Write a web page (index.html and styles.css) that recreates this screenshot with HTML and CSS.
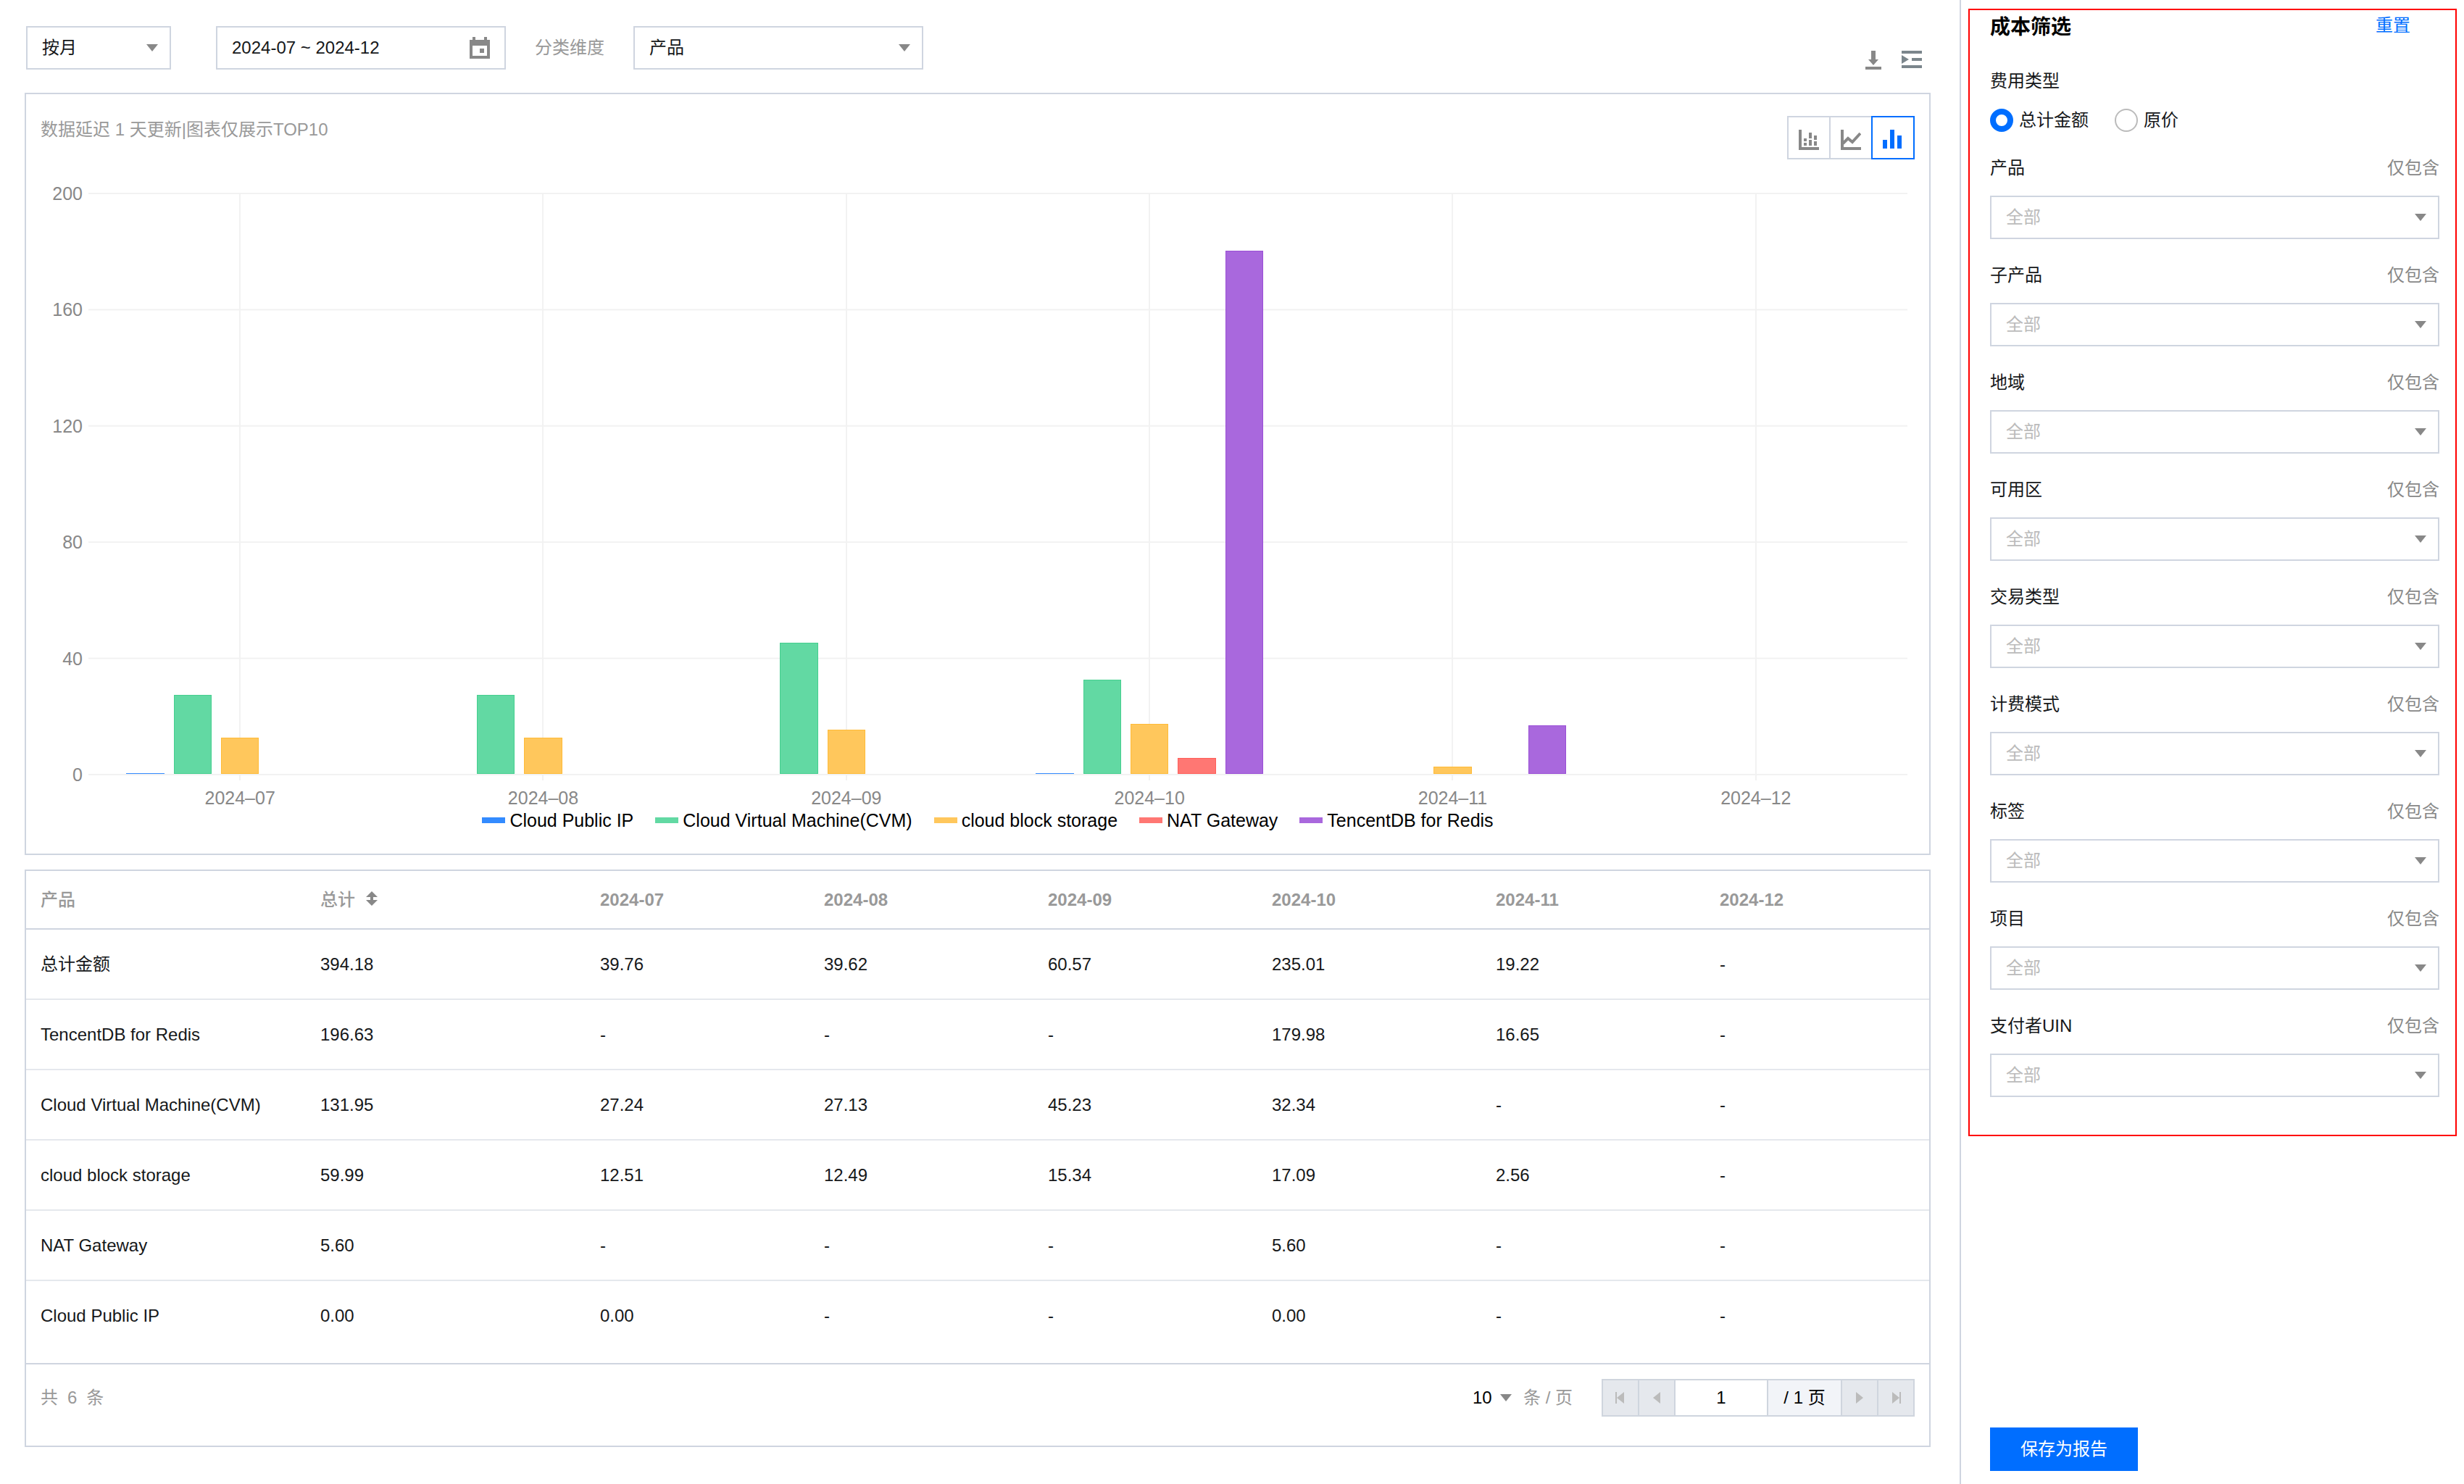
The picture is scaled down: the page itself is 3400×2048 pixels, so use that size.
FILE: index.html
```html
<!DOCTYPE html>
<html lang="zh">
<head>
    <meta charset="UTF-8">
    <meta name="viewport" content="width=device-width, initial-scale=1.0">
    <title>成本分析</title>
    <link rel="stylesheet" href="styles.css">
</head>
<body>

    <main class="main">
        <div class="toolbar">
            <select class="select period" aria-label="周期">
                <option>按月</option>
            </select>
            <div class="date-box">
                <input type="text" class="date-input" aria-label="日期" value="2024-07 ~ 2024-12">
                <svg class="icon" width="28" height="30" viewBox="0 0 28 30">
                    <path fill="#888" fill-rule="evenodd" d="M4 0h4v4h12V0h4v4h4v26H0V4h4zM4 12v14h20V12zM14 16h6v6h-6z"/>
                </svg>
            </div>
            <label class="dimension-label" for="dimension">分类维度</label>
            <select class="select dimension" id="dimension">
                <option>产品</option>
            </select>
            <div class="tools">
                <button class="icon-btn" aria-label="下载">
                    <svg width="22" height="26" viewBox="0 0 22 26" fill="#888">
                        <path d="M8 0h6v12h4l-7 8-7-8h4zM0 22h22v4H0z"/>
                    </svg>
                </button>
                <button class="icon-btn" aria-label="收起">
                    <svg width="28" height="26" viewBox="0 0 28 26" fill="#7b868c">
                        <path d="M0 0h28v4H0zM14 10h14v4H14zM0 20h28v4H0zM0 6l10 6-10 6z"/>
                    </svg>
                </button>
            </div>
        </div>

        <section class="panel chart-panel">
            <div class="chart-head">
                <p class="chart-tip">数据延迟 1 天更新|图表仅展示TOP10</p>
                <div class="chart-types">
                    <button class="type-btn" aria-label="堆积图">
                        <svg width="28" height="28" viewBox="0 0 28 28" fill="#888">
                            <path d="M0 0h4v24h24v4H0zM7 12h4v4H7zM7 18h4v4H7zM14 4h4v8h-4zM14 14h4v8h-4zM21 8h4v6h-4zM21 16h4v6h-4z"/>
                        </svg>
                    </button>
                    <button class="type-btn" aria-label="折线图">
                        <svg width="28" height="28" viewBox="0 0 28 28">
                            <path fill="#888" d="M0 0h4v24h24v4H0z"/>
                            <path fill="none" stroke="#888" stroke-width="4" d="M3 19l7-7 6 5L27 5"/>
                        </svg>
                    </button>
                    <button class="type-btn active" aria-label="柱状图">
                        <svg width="28" height="28" viewBox="0 0 28 28" fill="#006eff">
                            <path d="M0 14h6v12H0zM10 0h6v26h-6zM20 8h6v18h-6z"/>
                        </svg>
                    </button>
                </div>
            </div>

            <div class="chart">
                <div class="y-axis">
                    <span>200</span>
                    <span>160</span>
                    <span>120</span>
                    <span>80</span>
                    <span>40</span>
                    <span>0</span>
                </div>
                <div class="plot">
                    <div class="month">
                        <div class="bars">
                            <i class="bar blue" style="height: 0%"></i>
                            <i class="bar green" style="height: 13.62%"></i>
                            <i class="bar yellow" style="height: 6.26%"></i>
                        </div>
                        <span class="month-name">2024–07</span>
                    </div>
                    <div class="month">
                        <div class="bars">
                            <i></i>
                            <i class="bar green" style="height: 13.57%"></i>
                            <i class="bar yellow" style="height: 6.25%"></i>
                        </div>
                        <span class="month-name">2024–08</span>
                    </div>
                    <div class="month">
                        <div class="bars">
                            <i></i>
                            <i class="bar green" style="height: 22.62%"></i>
                            <i class="bar yellow" style="height: 7.67%"></i>
                        </div>
                        <span class="month-name">2024–09</span>
                    </div>
                    <div class="month">
                        <div class="bars">
                            <i class="bar blue" style="height: 0%"></i>
                            <i class="bar green" style="height: 16.17%"></i>
                            <i class="bar yellow" style="height: 8.55%"></i>
                            <i class="bar red" style="height: 2.8%"></i>
                            <i class="bar purple" style="height: 89.99%"></i>
                        </div>
                        <span class="month-name">2024–10</span>
                    </div>
                    <div class="month">
                        <div class="bars">
                            <i></i>
                            <i></i>
                            <i class="bar yellow" style="height: 1.28%"></i>
                            <i></i>
                            <i class="bar purple" style="height: 8.33%"></i>
                        </div>
                        <span class="month-name">2024–11</span>
                    </div>
                    <div class="month">
                        <div class="bars"></div>
                        <span class="month-name">2024–12</span>
                    </div>
                </div>
            </div>

            <ul class="legend">
                <li><i class="swatch blue"></i>Cloud Public IP</li>
                <li><i class="swatch green"></i>Cloud Virtual Machine(CVM)</li>
                <li><i class="swatch yellow"></i>cloud block storage</li>
                <li><i class="swatch red"></i>NAT Gateway</li>
                <li><i class="swatch purple"></i>TencentDB for Redis</li>
            </ul>
        </section>

        <section class="panel">
            <table class="cost-table">
                <thead>
                    <tr>
                        <th class="wide cn">产品</th>
                        <th class="wide cn">总计
                            <svg class="sort" width="16" height="20" viewBox="0 0 16 20" fill="#888">
                                <path d="M8 0l8 8h-6v4h6l-8 8-8-8h6V8H0z"/>
                            </svg>
                        </th>
                        <th>2024-07</th>
                        <th>2024-08</th>
                        <th>2024-09</th>
                        <th>2024-10</th>
                        <th>2024-11</th>
                        <th>2024-12</th>
                    </tr>
                </thead>
                <tbody>
                    <tr><td>总计金额</td><td>394.18</td><td>39.76</td><td>39.62</td><td>60.57</td><td>235.01</td><td>19.22</td><td>-</td></tr>
                    <tr><td>TencentDB for Redis</td><td>196.63</td><td>-</td><td>-</td><td>-</td><td>179.98</td><td>16.65</td><td>-</td></tr>
                    <tr><td>Cloud Virtual Machine(CVM)</td><td>131.95</td><td>27.24</td><td>27.13</td><td>45.23</td><td>32.34</td><td>-</td><td>-</td></tr>
                    <tr><td>cloud block storage</td><td>59.99</td><td>12.51</td><td>12.49</td><td>15.34</td><td>17.09</td><td>2.56</td><td>-</td></tr>
                    <tr><td>NAT Gateway</td><td>5.60</td><td>-</td><td>-</td><td>-</td><td>5.60</td><td>-</td><td>-</td></tr>
                    <tr><td>Cloud Public IP</td><td>0.00</td><td>0.00</td><td>-</td><td>-</td><td>0.00</td><td>-</td><td>-</td></tr>
                </tbody>
            </table>
            <div class="table-foot">
                <div class="total"><span>共</span><span>6</span><span>条</span></div>
                <div class="page-size">
                    <select class="size-select" id="pageSize">
                        <option>10</option>
                    </select>
                    <label for="pageSize">条 / 页</label>
                </div>
                <div class="pager">
                    <button aria-label="首页" disabled>
                        <svg width="14" height="16" viewBox="0 0 14 16" fill="#bbb"><path d="M0 0h2v16H0zM12 0v16L2 8z"/></svg>
                    </button>
                    <button aria-label="上一页" disabled>
                        <svg width="14" height="16" viewBox="0 0 14 16" fill="#bbb"><path d="M12 0v16L2 8z"/></svg>
                    </button>
                    <input type="text" aria-label="页码" value="1">
                    <span class="page-count">/ 1 页</span>
                    <button aria-label="下一页" disabled>
                        <svg width="14" height="16" viewBox="0 0 14 16" fill="#bbb"><path d="M2 0v16l10-8z"/></svg>
                    </button>
                    <button aria-label="末页" disabled>
                        <svg width="14" height="16" viewBox="0 0 14 16" fill="#bbb"><path d="M12 0h2v16h-2zM2 0v16l10-8z"/></svg>
                    </button>
                </div>
            </div>
        </section>
    </main>

    <aside class="sidebar">
        <form class="filters">
            <div class="filters-head">
                <h2>成本筛选</h2>
                <a href="#">重置</a>
            </div>
            <p class="field-name">费用类型</p>
            <div class="radios">
                <label><input type="radio" name="fee" checked>总计金额</label>
                <label><input type="radio" name="fee">原价</label>
            </div>
            <div class="field">
                <label for="f1">产品</label><span>仅包含</span>
                <select class="select" id="f1"><option>全部</option></select>
            </div>
            <div class="field">
                <label for="f2">子产品</label><span>仅包含</span>
                <select class="select" id="f2"><option>全部</option></select>
            </div>
            <div class="field">
                <label for="f3">地域</label><span>仅包含</span>
                <select class="select" id="f3"><option>全部</option></select>
            </div>
            <div class="field">
                <label for="f4">可用区</label><span>仅包含</span>
                <select class="select" id="f4"><option>全部</option></select>
            </div>
            <div class="field">
                <label for="f5">交易类型</label><span>仅包含</span>
                <select class="select" id="f5"><option>全部</option></select>
            </div>
            <div class="field">
                <label for="f6">计费模式</label><span>仅包含</span>
                <select class="select" id="f6"><option>全部</option></select>
            </div>
            <div class="field">
                <label for="f7">标签</label><span>仅包含</span>
                <select class="select" id="f7"><option>全部</option></select>
            </div>
            <div class="field">
                <label for="f8">项目</label><span>仅包含</span>
                <select class="select" id="f8"><option>全部</option></select>
            </div>
            <div class="field">
                <label for="f9">支付者UIN</label><span>仅包含</span>
                <select class="select" id="f9"><option>全部</option></select>
            </div>
        </form>
        <button class="save-btn">保存为报告</button>
    </aside>

</body>
</html>
```

FILE: styles.css
```css
* {
    box-sizing: border-box;
}

body {
    margin: 0;
    min-height: 100vh;
    display: flex;
    background: #fff;
    color: #16181a;
    font-family: "Liberation Sans", "Noto Sans CJK SC", sans-serif;
    font-size: 24px;
    line-height: 36px;
}

button, input, select {
    font: inherit;
    color: inherit;
    margin: 0;
}

button {
    padding: 0;
    cursor: pointer;
}

h2, p, ul {
    margin: 0;
    padding: 0;
}

svg {
    display: block;
}

.main {
    flex: 1;
    min-width: 0;
    padding: 36px 40px 0 34px;
}

/* toolbar */
.toolbar {
    display: flex;
    align-items: center;
    height: 60px;
    padding: 0 12px 0 2px;
    margin-bottom: 32px;
}

.select {
    appearance: none;
    width: 100%;
    height: 60px;
    padding: 0 50px 0 20px;
    border: 2px solid #cfd5e0;
    border-radius: 0;
    background: #fff url("data:image/svg+xml,%3Csvg xmlns='http://www.w3.org/2000/svg' width='16' height='10'%3E%3Cpath fill='%23888' d='M0 0h16L8 10z'/%3E%3C/svg%3E") no-repeat right 16px center;
}

.period {
    width: 200px;
    margin-right: 62px;
}

.dimension {
    width: 400px;
}

.date-box {
    display: flex;
    align-items: center;
    width: 400px;
    height: 60px;
    padding: 0 20px;
    border: 2px solid #cfd5e0;
}

.date-input {
    flex: 1;
    min-width: 0;
    padding: 0;
    border: none;
    outline: none;
    background: none;
}

.dimension-label {
    margin: 0 40px;
    color: #999;
}

.tools {
    display: flex;
    align-self: flex-end;
    gap: 28px;
    margin-left: auto;
}

.icon-btn {
    border: none;
    background: none;
}

/* chart */
.panel {
    border: 2px solid #cfd5e0;
}

.chart-panel {
    padding: 30px 20px;
    margin-bottom: 20px;
}

.chart-head {
    display: flex;
    justify-content: space-between;
    align-items: flex-start;
    margin-bottom: 32px;
}

.chart-tip {
    line-height: 38px;
    color: #999;
}

.chart-types {
    display: flex;
}

.type-btn {
    display: flex;
    align-items: center;
    justify-content: center;
    width: 60px;
    height: 60px;
    padding-top: 6px;
    border: 2px solid #cfd5e0;
    background: #fff;
}

.type-btn + .type-btn {
    margin-left: -2px;
}

.type-btn.active {
    border-color: #006eff;
}

.chart {
    display: flex;
    padding-right: 10px;
    font-size: 25px;
    line-height: 30px;
    color: #888;
}

.y-axis {
    display: flex;
    flex-direction: column;
    justify-content: space-between;
    width: 66px;
    height: 832px;
    padding-right: 8px;
    text-align: right;
}

.plot {
    flex: 1;
    display: flex;
    margin-top: 14px;
    background: linear-gradient(#f2f2f2 2px, transparent 2px) repeat-y;
    background-size: 100% calc(802px / 5);
}

.month {
    flex: 1;
    background: linear-gradient(#f2f2f2, #f2f2f2) center top / 2px 811px no-repeat;
}

.bars {
    display: grid;
    grid-template-columns: repeat(5, 1fr);
    column-gap: 13px;
    align-items: end;
    height: 804px;
    padding: 0 12.5%;
    border-bottom: 2px solid #f2f2f2;
}

.month-name {
    display: block;
    padding-top: 16px;
    text-align: center;
    background: #fff;
    background-clip: content-box;
}

.bar {
    border: 1px solid;
}

.blue {
    background: #338bff;
    border-color: #338bff;
}

.bar.blue {
    border-bottom: none;
}

.green {
    background: #62d9a3;
    border-color: #45cf8f;
}

.yellow {
    background: #ffc75c;
    border-color: #ffbb38;
}

.red {
    background: #ff7773;
    border-color: #ff5f5a;
}

.purple {
    background: #a968dd;
    border-color: #9a4fd6;
}

.legend {
    display: flex;
    justify-content: center;
    gap: 30px;
    padding-left: 28px;
    list-style: none;
    font-size: 25px;
    line-height: 32px;
    color: #000;
}

.legend li {
    display: flex;
    align-items: center;
    gap: 6px;
}

.swatch {
    width: 32px;
    height: 8px;
}

/* table */
.cost-table {
    width: 100%;
    table-layout: fixed;
    border-collapse: separate;
    border-spacing: 0;
}

.cost-table th,
.cost-table td {
    padding: 0 20px;
    text-align: left;
    border-bottom: 2px solid #e5e8ed;
    white-space: nowrap;
}

.cost-table th {
    height: 81px;
    border-color: #cfd5e0;
    color: #999;
}

.cost-table th.cn {
    font-weight: 500;
}

.cost-table th.wide {
    width: 386px;
}

.cost-table td {
    height: 97px;
}

.cost-table tbody tr:last-child td {
    height: 115px;
    padding-bottom: 18px;
    border-color: #cfd5e0;
}

.sort {
    display: inline-block;
    margin-left: 8px;
}

.table-foot {
    display: flex;
    align-items: flex-start;
    padding: 20px 20px 40px;
    line-height: 52px;
    color: #999;
}

.total {
    display: flex;
    gap: 13px;
    margin-right: auto;
}

.page-size {
    display: flex;
    margin-right: 40px;
}

.size-select {
    appearance: none;
    width: 54px;
    height: 52px;
    padding: 0;
    border: none;
    color: #000;
    background: url("data:image/svg+xml,%3Csvg xmlns='http://www.w3.org/2000/svg' width='16' height='10'%3E%3Cpath fill='%23888' d='M0 0h16L8 10z'/%3E%3C/svg%3E") no-repeat right center;
    margin-right: 16px;
}

.pager {
    display: flex;
    border: 2px solid #cfd5de;
    line-height: 48px;
    color: #000;
}

.pager button {
    display: flex;
    align-items: center;
    justify-content: center;
    width: 50px;
    height: 48px;
    border: none;
    background: #e5e8ed;
}

.pager button:first-child {
    width: 48px;
}

.pager > * + * {
    border-left: 2px solid #cfd5de !important;
}

.pager input {
    width: 128px;
    padding: 0;
    border: none;
    text-align: center;
}

.page-count {
    width: 102px;
    text-align: center;
    background: #f2f4f8;
}

/* sidebar */
.sidebar {
    display: flex;
    flex-direction: column;
    justify-content: space-between;
    align-items: flex-start;
    width: 696px;
    padding: 12px 10px 18px;
    border-left: 2px solid #cfd5e0;
}

.filters {
    width: 100%;
    padding: 6px 22px 52px 28px;
    border: 2px solid #f00;
}

.filters-head {
    display: flex;
    justify-content: space-between;
    align-items: flex-start;
    padding-right: 40px;
    margin-bottom: 38px;
}

.filters-head h2 {
    font-size: 28px;
    line-height: 36px;
    color: #000;
}

.filters-head a {
    line-height: 30px;
    color: #006eff;
    text-decoration: none;
}

.radios {
    display: flex;
    gap: 36px;
    margin-top: 20px;
    line-height: 32px;
}

.radios label {
    display: flex;
    gap: 8px;
}

.radios input {
    appearance: none;
    width: 32px;
    height: 32px;
    border: 2px solid #bbb;
    border-radius: 50%;
    background: #fff;
}

.radios input:checked {
    border: 8px solid #006eff;
}

.field {
    display: flex;
    flex-wrap: wrap;
    justify-content: space-between;
    row-gap: 20px;
    margin-top: 32px;
}

.field span {
    color: #888;
}

.field .select {
    color: #bbb;
}

.save-btn {
    width: 204px;
    height: 60px;
    margin-left: 30px;
    border: none;
    background: #006eff;
    color: #fff;
}
```
